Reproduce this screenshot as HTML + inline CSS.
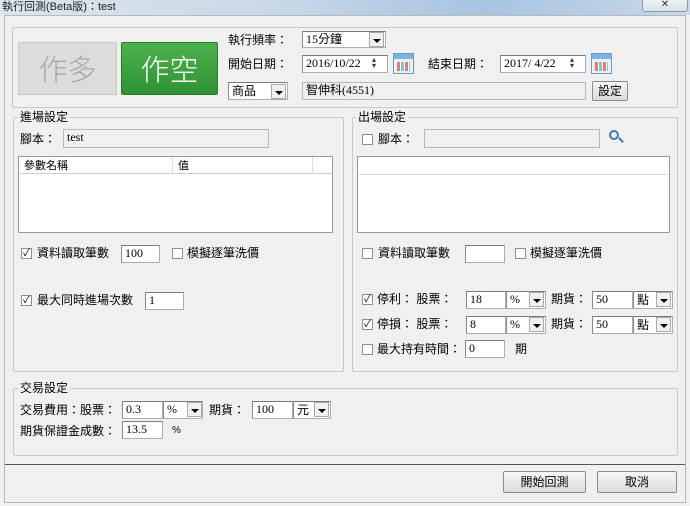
<!DOCTYPE html>
<html><head><meta charset="utf-8"><style>
*{box-sizing:border-box;margin:0;padding:0}
body{width:690px;height:506px;background:#f0f0f0;font-family:"Liberation Sans","Noto Sans CJK TC",sans-serif;font-size:12px;color:#000;position:relative;overflow:hidden}
.a{position:absolute;white-space:nowrap}
.t{position:absolute;white-space:nowrap;line-height:14px}
.g{position:absolute;border:1px solid #c8c8c8;border-radius:2px}
.gl{position:absolute;background:#f0f0f0;padding:0 2px;line-height:14px}
.in{position:absolute;background:#fff;border:1px solid #abadb3;border-top-color:#7a7a7a;border-left-color:#8a8a8a;line-height:15px;padding-left:3px;font-family:"Liberation Serif","Noto Sans CJK TC",serif}
.dis{background:#f0f0f0;border-color:#b8b8b8}
.cb{position:absolute;width:11px;height:11px;border:1px solid #8f8f8f;background:#fff;font-size:10px;line-height:9px;text-align:center}
.dd{position:absolute;width:15px;height:15px;background:#f0f0f0;border:1px solid #aaa;}
.dd:after{content:"";position:absolute;left:3px;top:6px;border-left:4px solid transparent;border-right:4px solid transparent;border-top:4px solid #000}
.btn{position:absolute;background:linear-gradient(#f6f6f6,#dcdcdc);border:1px solid #8a8a8a;border-radius:2px;text-align:center}
.cal{position:absolute;width:21px;height:21px;border:1px solid #6a9bc8;background:linear-gradient(#7fb2e0 0 5px,#e8f2fa 5px);}
.cal:after{content:"";position:absolute;left:3px;top:8px;width:13px;height:9px;background:repeating-linear-gradient(90deg,#e07a7a 0 3px,#fff 3px 4px,#7fc8c0 4px 7px,#fff 7px 8px)}
</style></head><body>
<div class="a" style="left:0;top:0;width:690px;height:15px;background:linear-gradient(90deg,#dde6ee,#c8d8e8 40%,#a8c4e0 70%,#c8d8ea)"></div>
<div class="t" style="left:2px;top:0;font-size:11px;color:#222">執行回測(Beta版)：test</div>
<div class="a" style="left:642px;top:-2px;width:46px;height:14px;border:1px solid #8a9aaa;border-radius:3px;background:linear-gradient(#f0f4f8,#d8e0e8);font-size:10px;text-align:center;line-height:12px;color:#333">✕</div>
<div class="a" style="left:4px;top:15px;width:682px;height:488px;border:1px solid #b8b8b8;background:#f0f0f0"></div>

<!-- top group -->
<div class="g" style="left:12px;top:27px;width:666px;height:81px"></div>
<div class="a" style="left:18px;top:42px;width:99px;height:53px;background:#dcdcdc;border:1px solid #c8c8c8;color:#a8a8a8;font-size:29px;text-align:center;line-height:51px;font-family:'Noto Sans CJK TC',sans-serif;font-weight:300">作多</div>
<div class="a" style="left:121px;top:42px;width:97px;height:53px;background:linear-gradient(#4cb24c,#2f9236);border:1px solid #2a7a2a;border-radius:2px;color:#fff;font-size:29px;text-align:center;line-height:51px;font-family:'Noto Sans CJK TC',sans-serif;font-weight:300">作空</div>
<div class="t" style="left:228px;top:33px">執行頻率：</div>
<div class="in" style="left:302px;top:31px;width:84px;height:17px">15分鐘</div><div class="dd" style="left:369px;top:32px"></div>
<div class="t" style="left:228px;top:57px">開始日期：</div>
<div class="in" style="left:302px;top:55px;width:86px;height:18px">2016/10/22</div>
<div class="a" style="left:372px;top:57px;font-size:8px;line-height:6px;color:#333">▴<br>▾</div>
<div class="cal" style="left:393px;top:53px"></div>
<div class="t" style="left:428px;top:57px">結束日期：</div>
<div class="in" style="left:500px;top:55px;width:86px;height:18px">2017/ 4/22</div>
<div class="a" style="left:570px;top:57px;font-size:8px;line-height:6px;color:#333">▴<br>▾</div>
<div class="cal" style="left:591px;top:53px"></div>
<div class="in" style="left:228px;top:82px;width:60px;height:18px;font-family:'Noto Sans CJK TC',sans-serif">商品</div><div class="dd" style="left:271px;top:84px"></div>
<div class="in dis" style="left:302px;top:82px;width:284px;height:18px">智伸科(4551)</div>
<div class="btn" style="left:592px;top:81px;width:36px;height:20px;line-height:18px">設定</div>

<!-- entry group -->
<div class="g" style="left:13px;top:117px;width:331px;height:255px"></div>
<div class="gl" style="left:18px;top:110px">進場設定</div>
<div class="t" style="left:20px;top:132px">腳本：</div>
<div class="in dis" style="left:63px;top:129px;width:206px;height:19px">test</div>
<div class="a" style="left:18px;top:156px;width:315px;height:77px;background:#fff;border:1px solid #9a9a9a"></div>
<div class="a" style="left:19px;top:157px;width:313px;height:17px;border-bottom:1px solid #ccc;background:#fff"></div>
<div class="t" style="left:24px;top:159px;font-size:11px">參數名稱</div>
<div class="a" style="left:172px;top:157px;width:1px;height:17px;background:#ddd"></div>
<div class="t" style="left:178px;top:159px;font-size:11px">值</div>
<div class="a" style="left:312px;top:157px;width:1px;height:17px;background:#ddd"></div>
<div class="cb" style="left:21px;top:248px">✓</div><div class="t" style="left:37px;top:246px">資料讀取筆數</div>
<div class="in" style="left:121px;top:245px;width:39px;height:18px">100</div>
<div class="cb" style="left:172px;top:248px"></div><div class="t" style="left:187px;top:246px">模擬逐筆洗價</div>
<div class="cb" style="left:21px;top:295px">✓</div><div class="t" style="left:37px;top:293px">最大同時進場次數</div>
<div class="in" style="left:145px;top:292px;width:39px;height:18px">1</div>

<!-- exit group -->
<div class="g" style="left:352px;top:117px;width:326px;height:255px"></div>
<div class="gl" style="left:356px;top:110px">出場設定</div>
<div class="cb" style="left:362px;top:134px"></div><div class="t" style="left:378px;top:132px">腳本：</div>
<div class="in dis" style="left:424px;top:129px;width:176px;height:19px"></div>
<div class="a" style="left:609px;top:130px;width:10px;height:10px;border:2px solid #3a7ab8;border-radius:50%"></div>
<div class="a" style="left:618px;top:139px;width:6px;height:2px;background:#3a7ab8;transform:rotate(45deg)"></div>
<div class="a" style="left:357px;top:156px;width:313px;height:77px;background:#fff;border:1px solid #9a9a9a"></div>
<div class="a" style="left:358px;top:157px;width:311px;height:18px;border-bottom:1px solid #ddd"></div>
<div class="cb" style="left:362px;top:248px"></div><div class="t" style="left:378px;top:246px">資料讀取筆數</div>
<div class="in" style="left:465px;top:245px;width:40px;height:18px"></div>
<div class="cb" style="left:515px;top:248px"></div><div class="t" style="left:530px;top:246px">模擬逐筆洗價</div>

<div class="cb" style="left:362px;top:294px">✓</div><div class="t" style="left:377px;top:292px">停利：&nbsp;股票：</div>
<div class="in" style="left:466px;top:291px;width:40px;height:18px">18</div>
<div class="in" style="left:506px;top:291px;width:40px;height:18px">%</div><div class="dd" style="left:529px;top:292px"></div>
<div class="t" style="left:551px;top:292px">期貨：</div>
<div class="in" style="left:592px;top:291px;width:41px;height:18px">50</div>
<div class="in" style="left:633px;top:291px;width:40px;height:18px;font-family:'Noto Sans CJK TC',sans-serif">點</div><div class="dd" style="left:656px;top:292px"></div>

<div class="cb" style="left:362px;top:319px">✓</div><div class="t" style="left:377px;top:317px">停損：&nbsp;股票：</div>
<div class="in" style="left:466px;top:316px;width:40px;height:18px">8</div>
<div class="in" style="left:506px;top:316px;width:40px;height:18px">%</div><div class="dd" style="left:529px;top:317px"></div>
<div class="t" style="left:551px;top:317px">期貨：</div>
<div class="in" style="left:592px;top:316px;width:41px;height:18px">50</div>
<div class="in" style="left:633px;top:316px;width:40px;height:18px;font-family:'Noto Sans CJK TC',sans-serif">點</div><div class="dd" style="left:656px;top:317px"></div>

<div class="cb" style="left:362px;top:344px"></div><div class="t" style="left:377px;top:342px">最大持有時間：</div>
<div class="in" style="left:465px;top:340px;width:40px;height:18px">0</div>
<div class="t" style="left:515px;top:342px">期</div>

<!-- trade group -->
<div class="g" style="left:13px;top:388px;width:665px;height:68px"></div>
<div class="gl" style="left:18px;top:381px">交易設定</div>
<div class="t" style="left:20px;top:403px">交易費用：股票：</div>
<div class="in" style="left:122px;top:401px;width:41px;height:18px">0.3</div>
<div class="in" style="left:163px;top:401px;width:40px;height:18px">%</div><div class="dd" style="left:187px;top:402px"></div>
<div class="t" style="left:209px;top:403px">期貨：</div>
<div class="in" style="left:252px;top:401px;width:41px;height:18px">100</div>
<div class="in" style="left:293px;top:401px;width:38px;height:18px;font-family:'Noto Sans CJK TC',sans-serif">元</div><div class="dd" style="left:314px;top:402px"></div>
<div class="t" style="left:20px;top:424px">期貨保證金成數：</div>
<div class="in" style="left:122px;top:421px;width:41px;height:18px">13.5</div>
<div class="t" style="left:172px;top:424px;font-size:10px">%</div>

<div class="a" style="left:5px;top:464px;width:680px;height:1px;background:#555"></div>
<div class="btn" style="left:503px;top:471px;width:83px;height:22px;line-height:20px">開始回測</div>
<div class="btn" style="left:597px;top:471px;width:80px;height:22px;line-height:20px">取消</div>
</body></html>
